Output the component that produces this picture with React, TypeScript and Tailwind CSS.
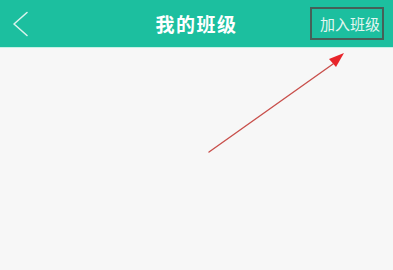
import React from 'react';

const App: React.FC = () => {
  return (
    <div className="relative w-[393px] h-[270px] bg-[#f7f7f7] overflow-hidden" style={{ fontFamily: '"Noto Sans CJK SC", "Noto Sans", sans-serif' }}>
      {/* Header */}
      <header className="h-[48px] bg-[#1cbf9f] border-b border-[#c4f1e6] grid grid-cols-[1fr_auto_1fr] items-center">
        <div className="pl-[12px] flex items-center">
          <svg width="18" height="26" viewBox="0 0 18 26" fill="none">
            <path d="M15 1.5 L2 13 L15 24.5" stroke="#d8f3ec" strokeWidth="1.6" strokeLinecap="round" strokeLinejoin="round" />
          </svg>
        </div>
        <h1 className="text-[19px] font-bold text-white leading-none tracking-[1.5px]">我的班级</h1>
        <div className="flex justify-end pr-[9px]">
          <button className="h-[33px] pl-[8px] pr-[2px] border-2 border-[#456058] text-[15px] text-[#e3f6f1] leading-none">
            加入班级
          </button>
        </div>
      </header>

      {/* Annotation arrow */}
      <svg className="absolute left-0 top-0" width="393" height="270" viewBox="0 0 393 270">
        <path d="M209 152 L333 64" stroke="#c9504c" strokeWidth="1.4" fill="none" strokeLinecap="round" />
        <polygon points="344,53 329,59 336,67" fill="#e8242a" />
      </svg>
    </div>
  );
};

export default App;
